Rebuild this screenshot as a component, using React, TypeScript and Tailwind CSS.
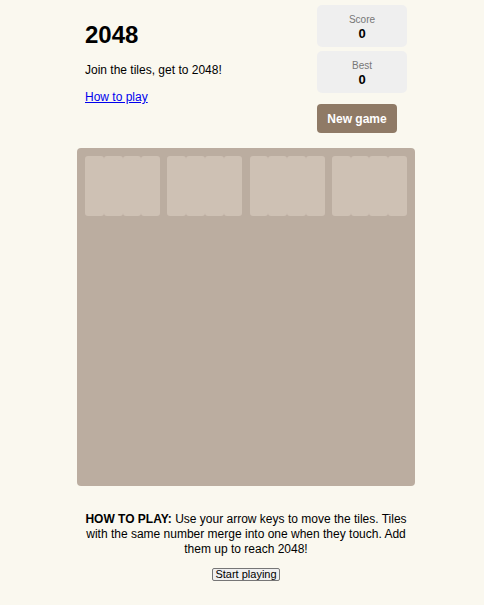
import React from "react";

const font = { fontFamily: '"Liberation Sans", Arial, sans-serif' };

function ScoreBox({ label, value }: { label: string; value: number }) {
  return (
    <div className="flex w-[90px] flex-col items-center rounded-[5px] bg-[#efefef] pt-[8px] pb-[5px]">
      <div className="text-[10px] leading-[13px] text-[#777]">{label}</div>
      <div className="text-[13px] font-bold leading-[16px] text-black">{value}</div>
    </div>
  );
}

export default function App() {
  const cols = [0, 1, 2, 3];
  return (
    <div className="min-h-[605px] w-full bg-[#faf8ef] pl-[8px] text-black" style={font}>
      <div className="mx-auto w-[338px] pt-[5px]">
        <div className="flex justify-between px-2">
          <div className="flex flex-col items-start">
            <h1 className="mt-[16px] text-[24px] font-bold leading-[28px]">2048</h1>
            <p className="mt-[13px] text-[12px] leading-[16px]">Join the tiles, get to 2048!</p>
            <a href="#" className="mt-[11px] text-[12px] leading-[16px] text-[#0000ee] underline">
              How to play
            </a>
          </div>
          <div className="flex flex-col gap-[4px]">
            <ScoreBox label="Score" value={0} />
            <ScoreBox label="Best" value={0} />
            <button className="mt-[7px] h-[29px] w-[80px] rounded-[4px] bg-[#8f7a66] text-[12px] font-semibold text-white">
              New game
            </button>
          </div>
        </div>

        <div className="mt-[15px] h-[338px] rounded-[4px] bg-[#bbada0] p-2">
          <div className="grid grid-cols-4 gap-x-[7.33px]">
            {cols.map((c) => (
              <div key={c} className="flex h-[60px]">
                {cols.map((t) => (
                  <div key={t} className="h-full flex-1 rounded-[3px] bg-[#cec1b4]" />
                ))}
              </div>
            ))}
          </div>
        </div>

        <div className="mt-[26px] px-2 text-center text-[12px] leading-[15px]">
          <p>
            <strong>HOW TO PLAY:</strong> Use your arrow keys to move the tiles. Tiles with the same number
            merge into one when they touch. Add them up to reach 2048!
          </p>
          <button className="mt-[11px] rounded-[2px] border border-[#767676] bg-[#efefef] px-[2px] text-[11px] leading-[11px] text-black">
            Start playing
          </button>
        </div>
      </div>
    </div>
  );
}
